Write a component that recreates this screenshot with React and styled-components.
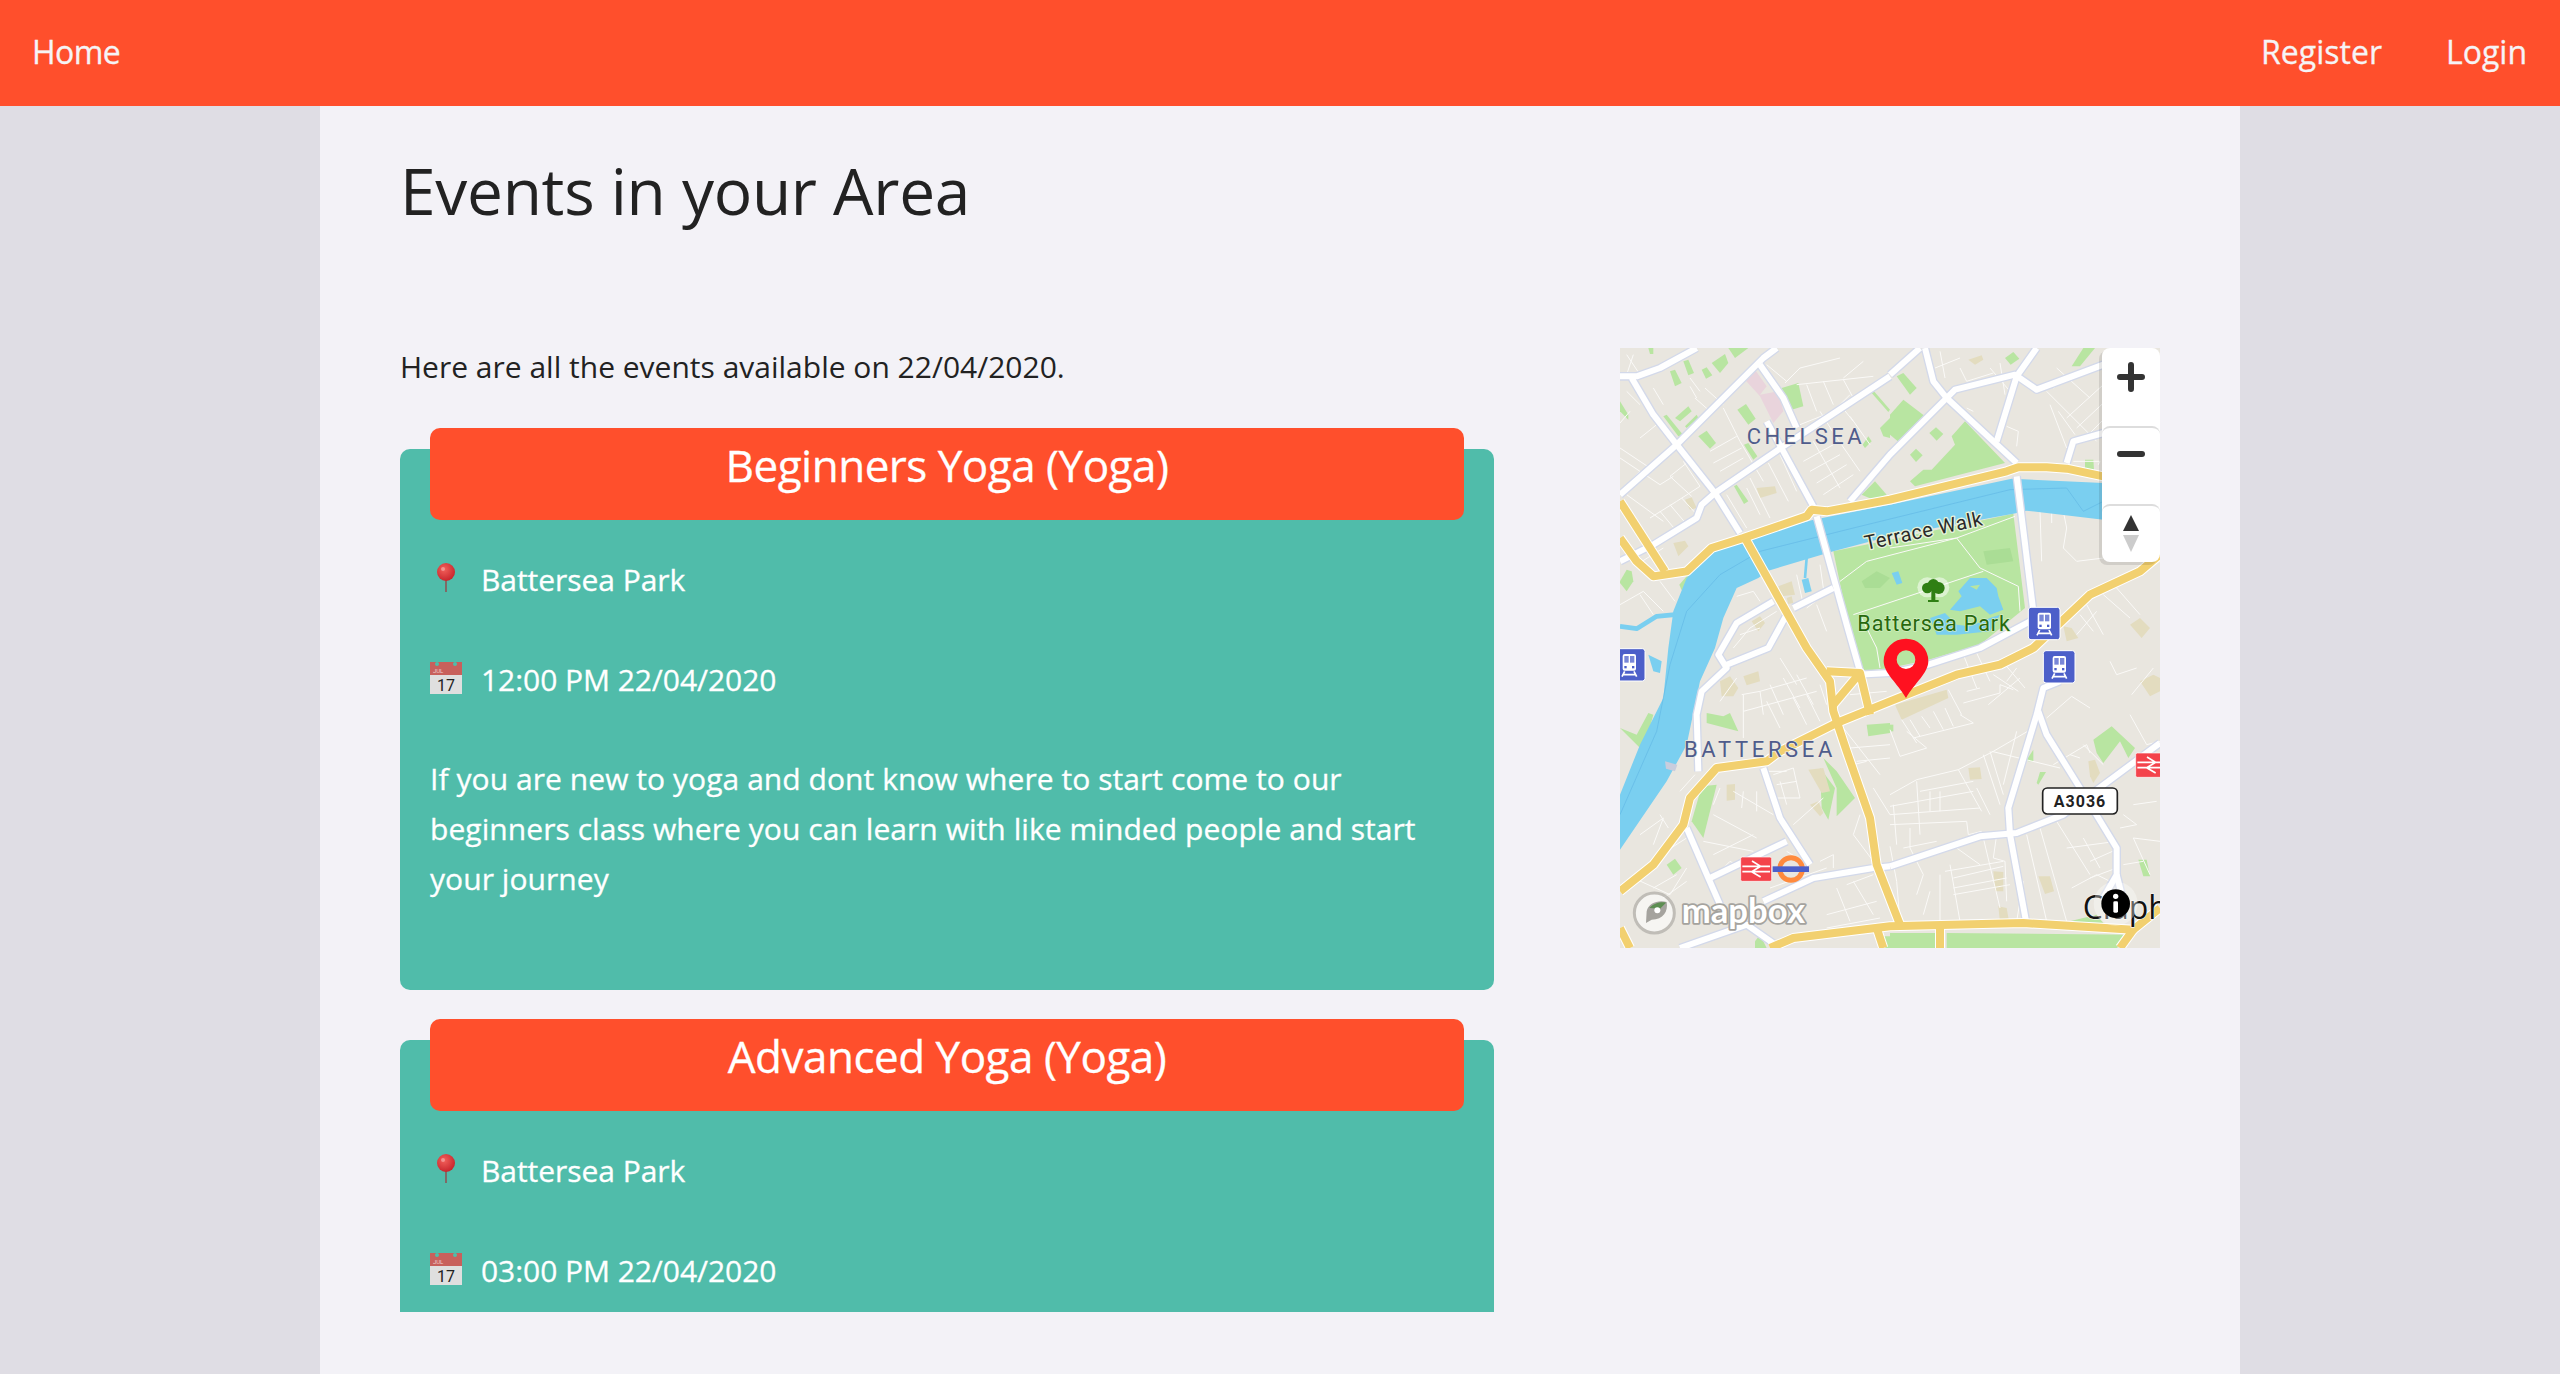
import React from 'react';
import styled, { createGlobalStyle } from 'styled-components';

const GlobalStyle = createGlobalStyle`
    html, body {
        margin: 0;
        height: 100%;
        overflow: hidden;
        background: #dfdde4;
        font-family: "Open Sans", "Liberation Sans", sans-serif;
    }
    * { box-sizing: border-box; }
`;

const Nav = styled.nav`
    height: 106px;
    background: #ff4f2c;
    display: flex;
    align-items: center;
    justify-content: space-between;
    padding: 0 33px 2px 32px;
`;

const NavGroup = styled.div`
    display: flex;
    gap: 64px;
`;

const NavLink = styled.a`
    font-size: 32px;
    line-height: 50px;
    color: #f6f4f6;
    text-decoration: none;
    letter-spacing: ${(p) => p.$tight ? '-0.6px' : '0'};
    -webkit-text-stroke: 0.3px #f6f4f6;
`;

const Page = styled.main`
    width: 1920px;
    height: 1268px;
    margin: 0 auto;
    padding: 45px 80px 0;
    background: #f3f2f7;
`;

const Title = styled.h1`
    margin: 0 0 111px;
    font-size: 64px;
    line-height: 80px;
    font-weight: 400;
    letter-spacing: -0.28px;
    color: #222;
`;

const Columns = styled.div`
    display: grid;
    grid-template-columns: 1094px 540px;
    column-gap: 126px;
`;

const Intro = styled.p`
    margin: 0;
    font-size: 30px;
    line-height: 50px;
    color: #222;
`;

const EventList = styled.div`
    height: 920px;
    overflow: hidden;
    padding-top: 57px;
`;

const Card = styled.article`
    background: #50bcaa;
    border-radius: 10px;
    padding: 0 30px 36px;
    color: #fff;
    margin-bottom: 50px;
    -webkit-text-stroke: 0.3px #fff;
`;

const CardHeader = styled.h2`
    position: relative;
    top: -21px;
    margin: 0 0 13px;
    height: 92px;
    background: #ff4f2c;
    border-radius: 10px;
    font-size: 44px;
    line-height: 74px;
    font-weight: 400;
    letter-spacing: -0.5px;
    text-align: center;
`;

const InfoRow = styled.div`
    display: flex;
    align-items: center;
    gap: 19px;
    height: 50px;
    margin-bottom: 50px;
    font-size: 30px;
    letter-spacing: -0.05px;
`;

const Emoji = styled.svg`
    width: 32px;
    height: 32px;
    flex: none;
    margin-bottom: 2px;
`;

const Description = styled.p`
    margin: 1px 0 50px;
    font-size: 30px;
    line-height: 50px;
    letter-spacing: 0.06px;
`;

const MapBox = styled.div`
    position: relative;
    width: 540px;
    height: 600px;
    margin-top: 6px;
    overflow: hidden;
    background: #e9e6df;
`;

const MapSvg = styled.svg`
    display: block;
    width: 540px;
    height: 600px;
`;

const Controls = styled.div`
    position: absolute;
    top: 0;
    right: 0;
    width: 58px;
    border-radius: 8px;
    box-shadow: -3px 3px 0 rgba(0, 0, 0, 0.1);
    background: #fff;
`;

const ControlButton = styled.div`
    height: ${(p) => p.$h}px;
    display: flex;
    justify-content: center;
    align-items: flex-start;
    border-top: ${(p) => (p.$first ? 'none' : '2px solid #ddd')};
    border-radius: 8px;
    padding-top: ${(p) => p.$pad}px;
`;

const ControlIcon = styled.svg`
    width: 30px;
    height: 40px;
`;

const Minor = styled.polyline`
    fill: none;
    stroke: #fbfaf8;
    stroke-width: 3;
`;

const Road = styled.polyline`
    fill: none;
    stroke: ${(p) => p.$color};
    stroke-width: ${(p) => p.$w};
    stroke-linejoin: round;
    stroke-linecap: ${(p) => p.$cap || 'butt'};
`;

const Area = styled.polygon`
    fill: ${(p) => p.$color};
`;

const Label = styled.text`
    font-family: ${(p) => p.$font || 'Roboto, "Open Sans", sans-serif'};
    font-size: ${(p) => p.$size}px;
    font-weight: ${(p) => p.$weight || 400};
    fill: ${(p) => p.$color};
    stroke: ${(p) => p.$halo || 'none'};
    stroke-width: ${(p) => p.$haloW || 0};
    paint-order: stroke;
    stroke-linejoin: round;
`;

const GREEN = '#b8e5a1';
const TAN = '#e3dcbf';
const WATER = '#7acff0';

// quadrant coordinates: each is 810x900 in a 1620x1800 viewBox
const parks = [
    [0, 0, '0,160 25,200 25,215 0,190'], [0, 0, '150,70 165,65 185,105 165,115'], [0, 0, '190,40 205,35 222,75 205,82'],
    [0, 0, '245,65 260,58 277,82 258,92'], [0, 0, '275,45 315,18 325,45 300,75'], [0, 0, '325,0 385,0 345,30'],
    [0, 0, '165,210 205,175 215,190 180,220'], [0, 0, '130,205 140,200 190,262 175,265'], [0, 0, '195,235 230,200 235,210 200,240'],
    [0, 0, '235,265 260,248 288,285 270,302'], [0, 0, '352,185 378,168 407,212 385,230'], [0, 0, '372,290 385,285 412,325 400,335'],
    [0, 0, '342,415 350,410 385,460 372,468'], [0, 0, '485,120 535,105 550,175 505,188'], [0, 0, '755,135 762,130 810,185 805,192'],
    [0, 0, '780,240 810,210 810,270 790,265'], [0, 0, '725,440 765,400 800,440 760,455'], [0, 0, '728,290 745,265 755,280 735,300'],
    [0, 0, '0,700 20,665 35,670 40,700 20,730 0,705'], [0, 0, '178,710 200,685 225,685 185,727'],
    [0, 0, '85,0 100,0 100,18 90,18'],
    [810, 0, '20,85 40,75 80,120 60,140'], [810, 0, '0,200 40,155 105,205 30,285 0,260'], [810, 0, '118,255 138,238 160,258 140,278'],
    [810, 0, '60,320 78,302 98,322 78,342'], [810, 0, '60,400 100,365 125,365 195,290 185,265 225,220 345,345 75,415'],
    [810, 0, '545,55 580,0 615,0 570,55'], [810, 0, '345,30 370,12 388,32 362,50'], [810, 0, '585,335 610,335 612,365 585,360'],
    [0, 900, '260,195 310,205 330,195 355,250 260,225'], [0, 900, '85,195 100,200 70,310 0,240 50,260'], [0, 900, '245,415 290,410 250,570 215,520'],
    [0, 900, '610,330 650,370 705,450 650,505 650,420'], [0, 900, '600,360 645,420 625,515 605,480'], [0, 900, '740,230 810,225 810,255 745,265'],
    [0, 900, '140,650 165,632 185,660 160,680'], [0, 900, '405,880 420,860 440,900 405,900'],
    [810, 900, '410,335 430,305 430,340 415,340'], [810, 900, '440,405 450,372 468,372 445,410'],
    [810, 900, '610,275 665,235 735,300 715,330 690,280 640,345 620,315'], [810, 900, '745,635 770,635 780,685 760,685'],
    [810, 900, '0,230 10,230 10,250 0,250'], [810, 900, '0,855 140,855 140,900 0,900'], [810, 900, '170,855 730,860 680,900 170,900'],
    [810, 900, '530,822 620,800 640,825'], [0, 900, '790,865 810,865 810,900 795,900'],
];

const tans = [
    [0, 0, '410,420 465,415 470,435 420,450'], [0, 0, '195,455 215,448 230,480 210,485'], [0, 0, '160,585 195,578 205,595 175,625'],
    [0, 0, '475,715 515,700 525,740 485,745'], [0, 0, '500,750 515,745 520,765 505,768'], [0, 0, '395,820 420,805 435,825 415,850'],
    [810, 0, '235,35 275,22 280,35 255,50'], [810, 0, '720,830 750,810 780,840 755,870'], [810, 0, '520,835 545,840 565,870 530,880'],
    [0, 900, '370,85 415,70 420,100 380,112'], [0, 900, '300,100 330,85 355,120 340,145 305,145'], [0, 900, '320,410 345,408 345,455 320,458'],
    [0, 900, '565,365 610,360 630,430 605,435'], [0, 900, '570,470 595,460 610,495 600,505'],
    [810, 900, '15,170 170,125 175,150 35,215'], [810, 900, '235,360 270,358 275,393 240,395'], [810, 900, '310,670 340,672 340,730 315,730'],
    [810, 900, '445,685 480,685 492,730 465,738'], [810, 900, '325,775 350,780 357,820 330,822'], [810, 900, '595,340 615,335 630,375 610,405 600,385'],
    [810, 900, '750,100 790,80 810,90 810,130 780,145'],
];

const streets = [
    [0, 0, ['30,190 0,225', '0,300 90,360 140,325', '0,330 120,410 160,385', '60,370 20,410', '90,510 170,460 240,415 190,340', '120,490 170,550', '150,470 205,535',
        '185,450 240,510', '200,345 150,385 215,445', '20,440 130,520', '225,150 270,190 300,170', '270,310 350,265', '280,345 365,300', '300,370 370,330', '310,180 360,280 430,400',
        '390,390 450,510', '445,345 505,460', '480,320 530,430', '320,440 380,540', '380,420 420,500', '530,110 760,85', '560,110 590,190', '610,100 640,170', '670,95 700,150',
        '550,340 640,290', '570,370 660,320', '590,405 680,350', '610,440 700,380', '580,280 660,420', '630,240 720,370', '690,205 750,290', '495,105 540,60 660,30', '440,50 500,100',
        '670,90 730,40', '20,20 60,80', '40,20 20,80', '340,900 390,840 470,790', '350,745 400,730 420,760', '360,860 420,840', '450,880 480,820', '560,780 640,720', '590,770 620,850',
        '600,650 610,720', '530,680 550,770', '660,680 720,780 735,870', '50,650 130,600', '0,770 70,730 130,790', '60,740 100,800', '120,700 165,760', '210,90 240,130', '230,150 210,115',
        '110,230 60,270', '60,170 20,130', '100,120 130,170', '255,120 310,170', '540,230 640,190 690,140', '600,190 650,270', '700,220 660,170']],
    [810, 0, ['150,10 165,90', '135,60 210,30', '210,60 230,100 310,75', '300,60 360,130', '330,45 345,140', '480,170 530,300', '505,190 555,260', '470,130 620,280', '500,60 600,150',
        '490,120 560,70', '530,210 640,110', '560,240 640,165', '590,265 640,215', '350,235 385,250 380,295', '230,180 250,190', '450,490 455,640', '485,495 485,525',
        '520,490 530,540 520,600 560,640 640,630', '640,740 720,810', '680,720 750,800', '590,770 640,860', '570,800 610,850', '620,790 560,860', '0,600 200,570 375,505', '200,570 270,660 385,715 390,790',
        '0,770 280,670', '0,590 280,520 370,510', '550,340 630,340 625,350']],
    [0, 900, ['420,130 560,90', '365,140 420,130 430,200', '370,190 590,130', '450,110 490,200', '490,90 540,180', '530,80 580,170', '370,140 370,270', '350,90 300,160', '480,30 530,110',
        '600,110 620,170', '670,240 780,380', '700,350 740,340', '460,380 520,360 540,450 460,450', '340,430 460,500', '370,430 365,480', '410,430 410,490', '280,500 410,570', '250,580 400,610',
        '280,620 400,560', '60,560 130,510 100,590', '90,640 200,570', '40,690 150,740 200,660', '100,720 170,680', '130,750 200,700', '180,430 225,380', '120,500 145,540', '520,530 610,450',
        '500,610 550,640', '600,640 640,620 640,660', '650,720 690,820', '680,710 760,680', '720,500 700,560 760,640', '620,800 770,760', '620,840 780,810', '700,700 760,800',
        '270,700 330,640 400,680', '440,370 500,370', '470,410 530,400', '450,720 620,660', '690,140 800,130', '700,90 790,60', '740,0 810,60', '440,160 480,240', '520,150 560,230', '560,140 600,220',
        '300,420 280,470', '480,400 500,470', '690,300 810,290', '710,340 810,330', '760,420 810,500']],
    [810, 900, ['80,400 90,560', '0,475 250,430', '0,500 270,480', '10,470 20,590', '90,430 250,400', '120,430 120,490', '150,430 150,490', '205,365 275,490', '260,420 300,500', '300,310 340,440',
        '280,320 330,470', '305,310 510,360', '380,250 340,410', '400,310 370,430', '0,595 20,700 30,820', '60,540 60,600 100,680 80,740', '150,680 150,820', '165,670 340,640', '190,690 340,655',
        '190,720 350,690', '190,740 360,710', '180,650 210,820', '280,570 330,780', '320,560 310,630 345,640 350,760', '410,560 470,820', '450,540 530,820', '500,520 600,680', '530,600 680,580',
        '580,570 630,660', '545,720 620,680 680,710', '0,245 30,325 110,300 50,250', '70,270 250,225 210,200', '35,215 80,285', '60,215 90,265', '95,205 120,240', '130,190 160,245', '165,180 190,235',
        '175,125 215,200', '230,130 270,120', '220,165 330,135 330,110 370,125', '295,170 390,90', '220,20 260,120', '260,15 300,100', '310,80 385,130', '380,60 350,100', '350,55 405,120',
        '470,210 545,145 600,180', '720,200 770,290 810,280', '660,40 680,80 740,60', '725,140 790,60', '490,350 590,290 600,315', '540,320 570,330', '580,290 640,350', '700,500 740,530 690,540',
        '730,570 810,580', '730,470 800,460', '730,570 780,680', '600,640 690,600', '700,650 760,640', '600,690 680,660', '0,440 80,395 205,365 310,310 430,240', '0,530 230,520', '230,520 235,560 275,550',
        '40,600 140,580', '200,600 270,650', '100,800 120,730', '400,700 380,820']],
];

const majorRoads = [
    '0,85 50,85 120,60 230,0',
    '0,440 170,290 430,30 470,0',
    '35,90 100,200 170,290 285,435 360,555',
    '420,50 490,150 530,240',
    '440,220 490,310 580,475',
    '590,505 680,830 720,970',
    '810,85 620,210 490,295 285,435 245,470 230,510 100,590 0,640',
    '690,460 810,320 980,150',
    '915,0 940,100 980,150 1190,345',
    '980,150 1005,125 1185,80 1250,125 1450,50 1500,20',
    '1250,0 1190,85 1130,280',
    '810,80 900,0',
    '1340,345 1360,280 1450,255',
    '1190,385 1240,790',
    '1320,1000 1270,1020 1250,1100 1165,1380 1170,1460 1220,1730',
    '1255,1090 1280,1160 1380,1320 1490,1500 1490,1580 1450,1650',
    '1490,1580 1510,1660',
    '810,1555 1080,1465 1190,1455 1330,1400 1620,1185',
    '430,1660 580,1590 760,1560 810,1555',
    '270,1590 500,1480',
    '430,1260 480,1410 570,1550',
    '200,1440 265,1590 300,1670',
    '640,720 520,780',
    '460,760 350,825 295,920 320,960 245,1030 230,1100 235,1270',
    '500,800 445,900 320,950',
    '180,1800 380,1730 480,1800',
    '710,980 810,975 925,950 1080,900 1230,820',
];

const primaryRoads = [
    '0,460 135,670',
    '0,570 50,640 100,685 200,670 275,600 370,570 560,505 575,485 620,490 810,455 1160,370 1195,358 1280,358 1340,362 1450,385 1620,420',
    '375,570 560,900 630,1000 640,1090 680,1210 750,1410 770,1550 840,1730',
    '620,970 720,975 750,1100',
    '720,975 640,1070',
    '0,1630 100,1550 190,1430 210,1350 290,1260 440,1240 480,1210 650,1125 810,1060 1010,980 1140,950 1240,900 1410,740 1560,670 1620,620',
    '450,1800 520,1770 810,1735 1210,1725 1540,1745 1620,1680',
    '1540,1745 1500,1800',
    '960,1740 960,1800',
    '770,1740 790,1800',
    '0,1740 30,1800',
];

const RIVER = '0,1340 60,1190 130,1050 145,900 160,790 200,690 275,610 370,575 580,515 810,470 1175,392 1450,405 1620,420 1620,545 1450,515 1220,488 1180,497 810,565 640,610 445,668 415,690 350,720 310,810 285,900 240,1000 200,1190 140,1300 0,1505';
const BATTERSEA_PARK = '640,610 810,575 1180,497 1215,780 1080,890 925,935 810,960 725,970 700,900';
const LAKE_UPPER = '1015,730 1050,690 1100,690 1130,720 1135,745 1150,785 1110,800 1080,775 1020,790 990,785 1025,745';
const LAKE_LOWER = '930,810 975,795 1010,830 1050,835 1110,810 1140,800 1110,850 1010,860 950,860';

const TrainBadge = ({ x, y }) => (
    <g transform={`translate(${x} ${y})`}>
        <rect width="95" height="97" rx="8" fill="#4c5fc9" stroke="#fff" strokeWidth="3" />
        <rect x="28" y="16" width="40" height="50" rx="6" fill="#fff" />
        <rect x="33" y="22" width="13" height="20" fill="#4c5fc9" opacity=".75" />
        <rect x="50" y="22" width="13" height="20" fill="#4c5fc9" opacity=".75" />
        <rect x="33" y="52" width="7" height="7" fill="#4c5fc9" />
        <rect x="56" y="52" width="7" height="7" fill="#4c5fc9" />
        <path d="M34 68 L26 84 M62 68 L70 84 M28 78 H68" stroke="#fff" strokeWidth="5" fill="none" />
    </g>
);

const RailBadge = ({ x, y }) => (
    <g transform={`translate(${x} ${y})`}>
        <rect width="93" height="73" rx="5" fill="#f4434b" stroke="#fff" strokeWidth="2" />
        <path d="M5 28 H60 L34 12 M88 28 H30 M5 44 H88 M33 44 L60 60 M60 28 L33 44" stroke="#fff" strokeWidth="5" fill="none" />
    </g>
);

const PinEmoji = () => (
    <Emoji viewBox="0 0 32 32">
        <defs>
            <radialGradient id="pinBall" cx=".4" cy=".35" r=".7">
                <stop offset="0" stopColor="#f2605a" />
                <stop offset="1" stopColor="#c5222a" />
            </radialGradient>
        </defs>
        <rect x="15" y="14" width="2" height="16" fill="#7f6a66" />
        <circle cx="16" cy="10" r="9" fill="url(#pinBall)" />
        <circle cx="13" cy="7" r="2" fill="#fff" opacity=".35" />
    </Emoji>
);

const CalendarEmoji = () => (
    <Emoji viewBox="0 0 32 32">
        <rect width="32" height="32" fill="#dfdfdf" />
        <rect width="32" height="13" fill="#c8605c" />
        <circle cx="7" cy="2" r="2" fill="#50bcaa" />
        <circle cx="25" cy="2" r="2" fill="#50bcaa" />
        <text x="3" y="11" fontSize="6" fontFamily="Roboto, sans-serif" fill="#ecc" strokeWidth="0">JUL</text>
        <text x="16" y="29" fontSize="16" textAnchor="middle" fontFamily="Roboto, sans-serif" fill="#222" stroke="none">17</text>
    </Emoji>
);

const MapView = () => (
    <MapBox>
        <MapSvg viewBox="0 0 1620 1800">
            <rect width="1620" height="1800" fill="#e9e6df" />
            {parks.map(([x, y, pts], i) => <Area key={i} points={pts} $color={GREEN} transform={`translate(${x} ${y})`} />)}
            {tans.map(([x, y, pts], i) => <Area key={i} points={pts} $color={TAN} transform={`translate(${x} ${y})`} />)}
            <Area points="375,95 405,65 440,115 420,140 475,130 490,190 460,225 420,145" $color="#e9d4dc" />
            {streets.map(([x, y, lines], i) => (
                <g key={i} transform={`translate(${x} ${y})`}>
                    {lines.map((pts) => <Minor key={pts} points={pts} />)}
                </g>
            ))}
            <Area points={BATTERSEA_PARK} $color={GREEN} />
            <Area points="1090,610 1170,600 1180,640 1100,650" $color="#aadd95" />
            <Area points="725,700 770,670 810,690 780,720 735,720" $color="#aadd95" />
            <Minor points="810,600 1010,570 1185,505" />
            <Minor points="660,700 740,640 1010,570 1080,660 1195,715 1200,790" />
            <Minor points="700,800 1090,670" />
            <Minor points="725,810 770,900 780,960" />
            <Area points={RIVER} $color={WATER} />
            <Road points="0,1400 110,1150 150,950 200,790 300,680 420,610 700,540 1170,425 1340,420 1390,490 1450,460" $color="#62b8e6" $w={2} />
            <Road points="0,835 50,842 110,805 165,800" $color={WATER} $w={14} />
            <Road points="560,630 555,690" $color={WATER} $w={8} />
            <Area points="545,695 565,690 575,730 555,735" $color={WATER} />
            <Area points="85,920 125,940 120,975 100,970" $color={WATER} />
            <Area points="815,675 835,670 847,705 830,710" $color={WATER} />
            <Area points={LAKE_UPPER} $color={WATER} />
            <Area points={LAKE_LOWER} $color={WATER} />
            <Area points="1050,715 1080,710 1070,725" $color={GREEN} />
            <Area points="135,1240 172,1250 165,1270 138,1262" $color="#c9cddd" />

            {majorRoads.map((pts) => <Road key={pts} points={pts} $color="#d3d9ea" $w={26} />)}
            {majorRoads.map((pts) => <Road key={pts} points={pts} $color="#fff" $w={18} />)}
            {primaryRoads.map((pts) => <Road key={pts} points={pts} $color="#fff" $w={30} />)}
            {primaryRoads.map((pts) => <Road key={pts} points={pts} $color="#f2d06f" $w={24} />)}

            <TrainBadge x={1225} y={778} />
            <TrainBadge x={1270} y={908} />
            <TrainBadge x={-20} y={902} />
            <RailBadge x={362} y={1527} />
            <RailBadge x={1547} y={1215} />
            <circle cx="513" cy="1563" r="34" fill="none" stroke="#ff8a3d" strokeWidth="15" />
            <rect x="458" y="1555" width="109" height="17" fill="#4c5fc9" />

            <g transform="translate(940 730)">
                <circle cx="-18" cy="-12" r="30" fill="#fff" opacity=".5" />
                <circle cx="18" cy="-12" r="30" fill="#fff" opacity=".5" />
                <rect x="-6" y="-10" width="12" height="42" fill="#2f7f14" />
                <rect x="-16" y="26" width="32" height="6" fill="#2f7f14" />
                <circle cx="-18" cy="-10" r="16" fill="#2f7f14" />
                <circle cx="16" cy="-10" r="18" fill="#2f7f14" />
                <circle cx="0" cy="-20" r="17" fill="#2f7f14" />
            </g>

            <Label x="380" y="288" $size={66} $color="#4f5c8c" $halo="#ece9e2" $haloW={5} textLength="345">CHELSEA</Label>
            <Label x="192" y="1228" $size={66} $color="#4f5c8c" $halo="#ece9e2" $haloW={5} textLength="445">BATTERSEA</Label>
            <Label x="738" y="606" $size={60} $color="#2a2a2a" $halo="#e6f3dc" $haloW={8} textLength="360" transform="rotate(-12 738 606)">Terrace Walk</Label>
            <Label x="712" y="850" $size={65} $color="#27690f" $halo="#d7efc6" $haloW={4} textLength="458">Battersea Park</Label>

            <rect x="1268" y="1320" width="224" height="78" rx="14" fill="#fff" stroke="#222" strokeWidth="5" />
            <Label x="1380" y="1376" $size={48} $weight={700} $color="#222" textAnchor="middle" letterSpacing="3">A3036</Label>

            <path fillRule="evenodd" fill="#ff1120" d="M858 1050 C832 1005 791 975 791 939 A67 67 0 0 1 925 939 C925 975 884 1005 858 1050 Z M886 935 A28 28 0 1 0 830 935 A28 28 0 1 0 886 935 Z" />

            <circle cx="103" cy="1695" r="60" fill="#fff" opacity=".6" stroke="#a5a39e" strokeWidth="9" />
            <path d="M78 1725 L80 1690 C85 1665 115 1655 140 1662 C145 1690 130 1715 95 1715 Z" fill="#a5a39e" />
            <path d="M88 1680 C100 1665 125 1660 138 1664 L120 1682 Z" fill="#5d8e52" />
            <circle cx="112" cy="1687" r="9" fill="#fff" />
            <Label x="185" y="1725" $size={104} $weight={700} $font='Lato, "Open Sans", sans-serif' $color="#fff" $halo="#a5a39e" $haloW={11} textLength="370">mapbox</Label>

            <Label x="1388" y="1712" $size={96} $weight={500} $font='"Open Sans", sans-serif' $color="#111" $halo="#f4f3ef" $haloW={4}>Clapham</Label>
            <circle cx="1487" cy="1667" r="66" fill="#fff" opacity=".35" />
            <circle cx="1487" cy="1667" r="43" fill="#000" />
            <circle cx="1487" cy="1645" r="8" fill="#fff" />
            <rect x="1480" y="1660" width="14" height="34" rx="4" fill="#fff" />
        </MapSvg>
        <Controls>
            <ControlButton $first $h={78} $pad={9}>
                <ControlIcon viewBox="0 0 30 40">
                    <path d="M15 8 V32 M4 20 H26" stroke="#333" strokeWidth="6" strokeLinecap="round" />
                </ControlIcon>
            </ControlButton>
            <ControlButton $h={78} $pad={6}>
                <ControlIcon viewBox="0 0 30 40">
                    <path d="M4 20 H26" stroke="#333" strokeWidth="6" strokeLinecap="round" />
                </ControlIcon>
            </ControlButton>
            <ControlButton $h={58} $pad={9}>
                <ControlIcon viewBox="0 0 30 40">
                    <path d="M15 0 L23 16 H7 Z" fill="#333" />
                    <path d="M15 37 L23 20 H7 Z" fill="#ccc" />
                </ControlIcon>
            </ControlButton>
        </Controls>
    </MapBox>
);

const events = [
    {
        title: 'Beginners Yoga (Yoga)',
        place: 'Battersea Park',
        when: '12:00 PM 22/04/2020',
        text: 'If you are new to yoga and dont know where to start come to our beginners class where you can learn with like minded people and start your journey',
    },
    {
        title: 'Advanced Yoga (Yoga)',
        place: 'Battersea Park',
        when: '03:00 PM 22/04/2020',
    },
];

const EventCard = ({ event }) => (
    <Card>
        <CardHeader>{event.title}</CardHeader>
        <InfoRow><PinEmoji />{event.place}</InfoRow>
        <InfoRow><CalendarEmoji />{event.when}</InfoRow>
        {event.text ? <Description>{event.text}</Description> : null}
    </Card>
);

export default function App() {
    return (
        <>
            <GlobalStyle />
            <Nav>
                <NavLink href="#" $tight>Home</NavLink>
                <NavGroup>
                    <NavLink href="#">Register</NavLink>
                    <NavLink href="#">Login</NavLink>
                </NavGroup>
            </Nav>
            <Page>
                <Title>Events in your Area</Title>
                <Columns>
                    <div>
                        <Intro>Here are all the events available on 22/04/2020.</Intro>
                        <EventList>
                            {events.map((event) => <EventCard key={event.title} event={event} />)}
                        </EventList>
                    </div>
                    <MapView />
                </Columns>
            </Page>
        </>
    );
}
